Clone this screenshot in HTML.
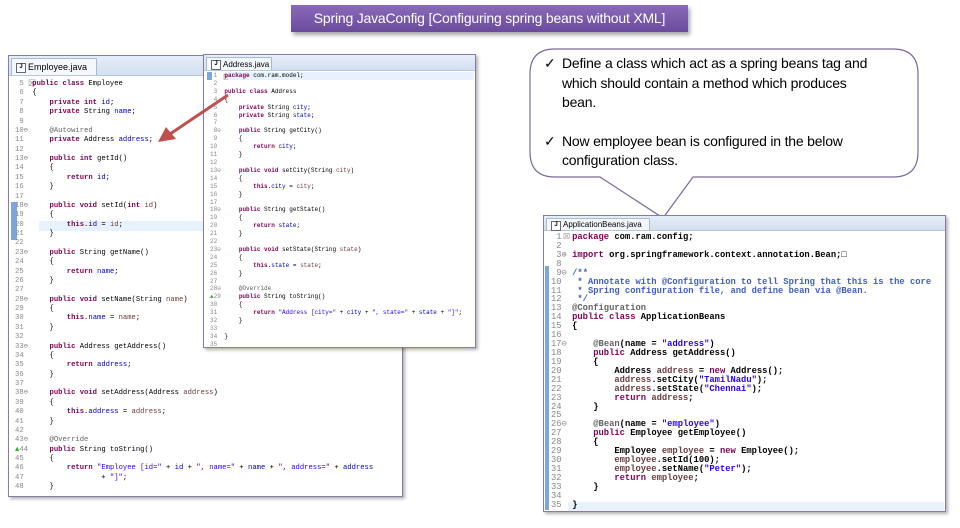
<!DOCTYPE html>
<html><head><meta charset="utf-8"><style>
*{margin:0;padding:0;box-sizing:border-box}
body{width:960px;height:528px;background:#fff;position:relative;overflow:hidden;font-family:"Liberation Sans",sans-serif}
.title{position:absolute;left:291px;top:5px;width:397px;height:27px;background:linear-gradient(#8a6bb8,#6a4a9c);color:#fff;font-size:14px;line-height:27px;text-align:center;box-shadow:2px 3px 4px rgba(0,0,0,.35);letter-spacing:-0.2px}
.panel{position:absolute;background:#fff;border:1px solid #8a7aa8;box-shadow:2px 2px 3px rgba(0,0,0,.3)}
.tabbar{position:absolute;left:0;top:0;right:0;background:linear-gradient(#e6eef8,#d3e0f0);border-bottom:1px solid #b8c8dc}
.tab{position:absolute;left:2px;top:2px;bottom:0;background:#f4f7fb;border:1px solid #aabbd0;border-bottom:none;font-size:8px;color:#000;padding-left:16px}
.tab:before{content:"J";position:absolute;left:4px;top:50%;margin-top:-4px;width:8px;height:8px;border:1px solid #667;font-size:6px;line-height:7px;text-align:center;font-weight:bold;background:#fff}
pre{position:absolute;font-family:"Liberation Mono",monospace;color:#000;white-space:pre}
.ln{color:#888;font-weight:normal}
.k{color:#7f0055;font-weight:bold}
.f{color:#0000c0}
.s{color:#2a00ff}
.c{color:#3f5fbf}
.a{color:#646464}
.v{color:#6a3e3e}
.hl{position:absolute;background:#e8f2fe}
.bar{position:absolute;background:#7aa7dc}
.code{position:absolute;font-family:"Liberation Mono",monospace;color:#000;white-space:normal}
.code div{height:8px;line-height:8px;white-space:pre}
</style></head><body>
<div class="title">Spring JavaConfig [Configuring spring beans without XML]</div>

<div class="panel" style="left:8px;top:55px;width:395px;height:442px">
 <div class="tabbar" style="height:20px"><div class="tab" style="width:86px;line-height:16px;font-size:9px">Employee.java <span style="color:#888">&#x2612;</span></div></div>
 <div class="bar" style="left:2px;top:146px;width:6px;height:38px"></div>
 <div class="hl" style="left:30px;top:165px;width:362px;height:10px"></div>
<pre style="left:6px;top:24px;font-size:7.2px;line-height:9.37px"><span class="ln"> 5</span>  <span class="k">public class</span> Employee
<span class="ln"> 6</span>  {
<span class="ln"> 7</span>      <span class="k">private int</span> <span class="f">id</span>;
<span class="ln"> 8</span>      <span class="k">private</span> String <span class="f">name</span>;
<span class="ln"> 9</span>
<span class="ln">10&#x2296;</span>     <span class="a">@Autowired</span>
<span class="ln">11</span>      <span class="k">private</span> Address <span class="f">address</span>;
<span class="ln">12</span>
<span class="ln">13&#x2296;</span>     <span class="k">public int</span> getId()
<span class="ln">14</span>      {
<span class="ln">15</span>          <span class="k">return</span> <span class="f">id</span>;
<span class="ln">16</span>      }
<span class="ln">17</span>
<span class="ln">18&#x2296;</span>     <span class="k">public void</span> setId(<span class="k">int</span> <span class="v">id</span>)
<span class="ln">19</span>      {
<span class="ln">20</span>          <span class="k">this</span>.<span class="f">id</span> = <span class="v">id</span>;
<span class="ln">21</span>      }
<span class="ln">22</span>
<span class="ln">23&#x2296;</span>     <span class="k">public</span> String getName()
<span class="ln">24</span>      {
<span class="ln">25</span>          <span class="k">return</span> <span class="f">name</span>;
<span class="ln">26</span>      }
<span class="ln">27</span>
<span class="ln">28&#x2296;</span>     <span class="k">public void</span> setName(String <span class="v">name</span>)
<span class="ln">29</span>      {
<span class="ln">30</span>          <span class="k">this</span>.<span class="f">name</span> = <span class="v">name</span>;
<span class="ln">31</span>      }
<span class="ln">32</span>
<span class="ln">33&#x2296;</span>     <span class="k">public</span> Address getAddress()
<span class="ln">34</span>      {
<span class="ln">35</span>          <span class="k">return</span> <span class="f">address</span>;
<span class="ln">36</span>      }
<span class="ln">37</span>
<span class="ln">38&#x2296;</span>     <span class="k">public void</span> setAddress(Address <span class="v">address</span>)
<span class="ln">39</span>      {
<span class="ln">40</span>          <span class="k">this</span>.<span class="f">address</span> = <span class="v">address</span>;
<span class="ln">41</span>      }
<span class="ln">42</span>
<span class="ln">43&#x2296;</span>     <span class="a">@Override</span>
<span class="ln"><span style="color:#3a3">&#x25B2;</span>44</span>     <span class="k">public</span> String toString()
<span class="ln">45</span>      {
<span class="ln">46</span>          <span class="k">return</span> <span class="s">"Employee [id="</span> + <span class="f">id</span> + <span class="s">", name="</span> + <span class="f">name</span> + <span class="s">", address="</span> + <span class="f">address</span>
<span class="ln">47</span>                  + <span class="s">"]"</span>;
<span class="ln">48</span>      }</pre>
</div>

<div class="panel" style="left:203px;top:54px;width:273px;height:294px">
 <div class="tabbar" style="height:16px"><div class="tab" style="width:66px;line-height:13px;font-size:8px">Address.java <span style="color:#888">&#x2612;</span></div></div>
 <div class="bar" style="left:3px;top:17px;width:5px;height:8px"></div>
 <div class="hl" style="left:24px;top:17px;width:246px;height:8px"></div>
<pre style="left:6px;top:17px;font-size:6px;line-height:7.9px"><span class="ln"> 1</span>  <span class="k">package</span> com.ram.model;
<span class="ln"> 2</span>
<span class="ln"> 3</span>  <span class="k">public class</span> Address
<span class="ln"> 4</span>  {
<span class="ln"> 5</span>      <span class="k">private</span> String <span class="f">city</span>;
<span class="ln"> 6</span>      <span class="k">private</span> String <span class="f">state</span>;
<span class="ln"> 7</span>
<span class="ln"> 8&#x2296;</span>     <span class="k">public</span> String getCity()
<span class="ln"> 9</span>      {
<span class="ln">10</span>          <span class="k">return</span> <span class="f">city</span>;
<span class="ln">11</span>      }
<span class="ln">12</span>
<span class="ln">13&#x2296;</span>     <span class="k">public void</span> setCity(String <span class="v">city</span>)
<span class="ln">14</span>      {
<span class="ln">15</span>          <span class="k">this</span>.<span class="f">city</span> = <span class="v">city</span>;
<span class="ln">16</span>      }
<span class="ln">17</span>
<span class="ln">18&#x2296;</span>     <span class="k">public</span> String getState()
<span class="ln">19</span>      {
<span class="ln">20</span>          <span class="k">return</span> <span class="f">state</span>;
<span class="ln">21</span>      }
<span class="ln">22</span>
<span class="ln">23&#x2296;</span>     <span class="k">public void</span> setState(String <span class="v">state</span>)
<span class="ln">24</span>      {
<span class="ln">25</span>          <span class="k">this</span>.<span class="f">state</span> = <span class="v">state</span>;
<span class="ln">26</span>      }
<span class="ln">27</span>
<span class="ln">28&#x2296;</span>     <span class="a">@Override</span>
<span class="ln"><span style="color:#3a3">&#x25B2;</span>29</span>     <span class="k">public</span> String toString()
<span class="ln">30</span>      {
<span class="ln">31</span>          <span class="k">return</span> <span class="s">"Address [city="</span> + <span class="f">city</span> + <span class="s">", state="</span> + <span class="f">state</span> + <span class="s">"]"</span>;
<span class="ln">32</span>      }
<span class="ln">33</span>
<span class="ln">34</span>  }
<span class="ln">35</span></pre>
</div>

<svg style="position:absolute;left:0;top:0" width="960" height="528">
 <line x1="228" y1="95" x2="170" y2="134" stroke="#c0504d" stroke-width="3"/>
 <polygon points="158,142 166,127 176,139" fill="#c0504d"/>
 <path d="M555,49 H893 Q918,49 918,74 V152 Q918,177 893,177 H693 L663,218 L600,177 H555 Q530,177 530,152 V74 Q530,49 555,49 Z" fill="#fff" stroke="#7a6a9a" stroke-width="1.2"/>
</svg>
<div style="position:absolute;left:544px;top:54px;width:370px;font-size:14px;line-height:19.5px;color:#000;letter-spacing:-0.2px;white-space:nowrap">
 <div style="padding-left:18px;position:relative"><span style="position:absolute;left:0">&#x2713;</span>Define a class which act as a spring beans tag and<br>which should contain a method which produces<br>bean.</div>
 <div style="padding-left:18px;position:relative;margin-top:19px"><span style="position:absolute;left:0">&#x2713;</span>Now employee bean is configured in the below<br>configuration class.</div>
</div>

<div class="panel" style="left:543px;top:215px;width:403px;height:297px">
 <div class="tabbar" style="height:15px"><div class="tab" style="width:104px;line-height:12px;font-size:8px">ApplicationBeans.java <span style="color:#888">&#x2612;</span></div></div>
 <div class="bar" style="left:1px;top:50px;width:4px;height:244px"></div>
 <div class="hl" style="left:24px;top:286px;width:376px;height:9px"></div>
<div class="code" style="left:7px;top:17px;font-size:8.8px;font-weight:bold;height:276px;display:flex;flex-direction:column;justify-content:space-between"><div><span class="ln"> 1</span>  <span class="k">package</span> com.ram.config;</div><div><span class="ln"> 2</span></div><div><span class="ln"> 3&#x2295;</span> <span class="k">import</span> org.springframework.context.annotation.Bean;&#x25A1;</div><div><span class="ln"> 8</span></div><div><span class="ln"> 9&#x2296;</span> <span class="c">/**</span></div><div><span class="ln">10</span>  <span class="c"> * Annotate with @Configuration to tell Spring that this is the core</span></div><div><span class="ln">11</span>  <span class="c"> * Spring configuration file, and define bean via @Bean.</span></div><div><span class="ln">12</span>  <span class="c"> */</span></div><div><span class="ln">13</span>  <span class="a">@Configuration</span></div><div><span class="ln">14</span>  <span class="k">public class</span> ApplicationBeans</div><div><span class="ln">15</span>  {</div><div><span class="ln">16</span></div><div><span class="ln">17&#x2296;</span>     <span class="a">@Bean</span>(name = <span class="s">"address"</span>)</div><div><span class="ln">18</span>      <span class="k">public</span> Address getAddress()</div><div><span class="ln">19</span>      {</div><div><span class="ln">20</span>          Address <span class="v">address</span> = <span class="k">new</span> Address();</div><div><span class="ln">21</span>          <span class="v">address</span>.setCity(<span class="s">"TamilNadu"</span>);</div><div><span class="ln">22</span>          <span class="v">address</span>.setState(<span class="s">"Chennai"</span>);</div><div><span class="ln">23</span>          <span class="k">return</span> <span class="v">address</span>;</div><div><span class="ln">24</span>      }</div><div><span class="ln">25</span></div><div><span class="ln">26&#x2296;</span>     <span class="a">@Bean</span>(name = <span class="s">"employee"</span>)</div><div><span class="ln">27</span>      <span class="k">public</span> Employee getEmployee()</div><div><span class="ln">28</span>      {</div><div><span class="ln">29</span>          Employee <span class="v">employee</span> = <span class="k">new</span> Employee();</div><div><span class="ln">30</span>          <span class="v">employee</span>.setId(100);</div><div><span class="ln">31</span>          <span class="v">employee</span>.setName(<span class="s">"Peter"</span>);</div><div><span class="ln">32</span>          <span class="k">return</span> <span class="v">employee</span>;</div><div><span class="ln">33</span>      }</div><div><span class="ln">34</span></div><div><span class="ln">35</span>  }</div></div>
</div>
</body></html>
